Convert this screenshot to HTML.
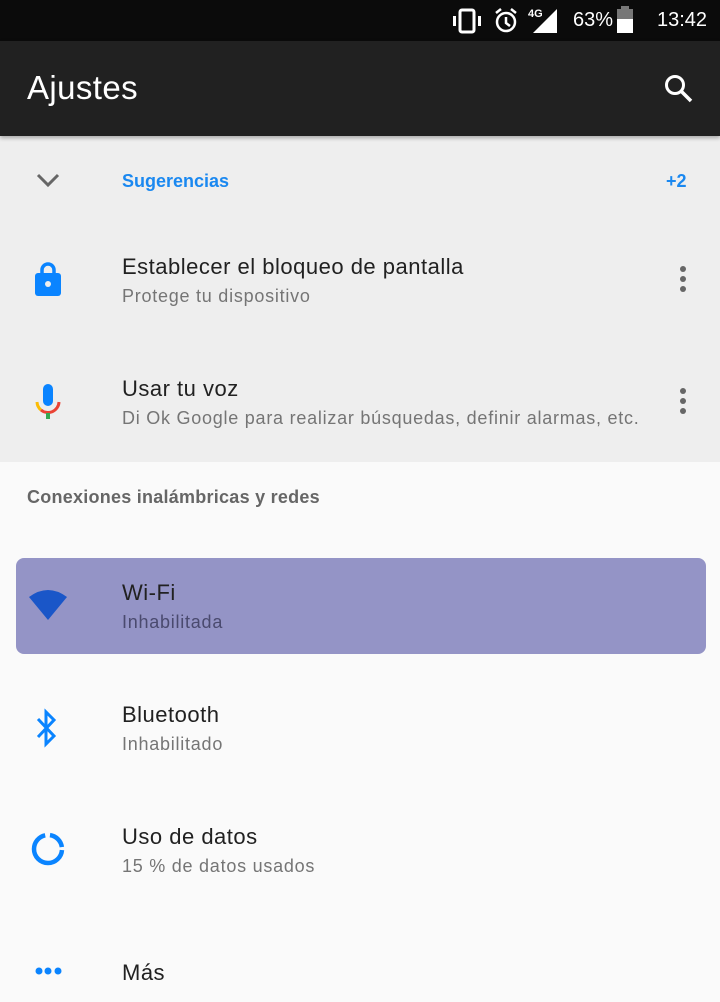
<!DOCTYPE html><html><head><style>
body{margin:0;width:720px;height:1002px;overflow:hidden;background:#fafafa;font-family:"Liberation Sans",sans-serif;position:relative}
.a{position:absolute}
.t{position:absolute;left:122px;font-size:22px;letter-spacing:0.5px;color:#212121;white-space:nowrap}
.s{position:absolute;left:122px;font-size:18px;letter-spacing:0.75px;color:#757575;white-space:nowrap}
.dots{position:absolute;left:680px;width:6px}
.dots i{display:block;width:6px;height:6px;border-radius:3px;background:#666;margin-bottom:4px}
</style></head><body>
<div class="a" style="left:0;top:0;width:720px;height:41px;background:#0b0b0b"></div>
<svg class="a" style="left:450px;top:6px" width="40" height="30" viewBox="0 0 40 30"><rect x="10" y="4" width="14" height="22" rx="2" fill="none" stroke="#fff" stroke-width="3"/><rect x="3" y="10" width="3" height="10" fill="#fff"/><rect x="28" y="10" width="3" height="10" fill="#fff"/></svg>
<svg class="a" style="left:493px;top:7px" width="26" height="28" viewBox="0 0 26 28"><circle cx="13" cy="15" r="9" fill="none" stroke="#fff" stroke-width="2.5"/><path d="M13 10v6l4 3M3 6l5-4M23 6l-5-4" stroke="#fff" stroke-width="2.5" fill="none"/></svg>
<div class="a" style="left:528px;top:8px;font-size:11px;color:#fff;font-weight:bold">4G</div>
<svg class="a" style="left:532px;top:9px" width="26" height="24"><polygon points="25,0 25,24 1,24" fill="#fff"/></svg>
<div class="a" style="left:573px;top:9px;font-size:20px;color:#fff">63%</div>
<div class="a" style="left:617px;top:9px;width:16px;height:24px;background:#fff"></div><div class="a" style="left:617px;top:9px;width:16px;height:10px;background:#777"></div><div class="a" style="left:621px;top:6px;width:8px;height:3px;background:#777"></div>
<div class="a" style="left:657px;top:9px;font-size:20px;color:#fff">13:42</div>
<div class="a" style="left:0;top:41px;width:720px;height:95px;background:#212121;box-shadow:0 2px 4px rgba(0,0,0,.3)"></div>
<div class="a" style="left:27px;top:69px;font-size:33px;letter-spacing:0.4px;color:#fff">Ajustes</div>
<svg class="a" style="left:663px;top:73px" width="32" height="32" viewBox="0 0 32 32"><circle cx="12" cy="12" r="8.5" fill="none" stroke="#fff" stroke-width="3"/><path d="M18 18l10 10" stroke="#fff" stroke-width="3.5"/></svg>
<div class="a" style="left:0;top:136px;width:720px;height:326px;background:#eeeeee;z-index:-1"></div>
<svg class="a" style="left:36px;top:172px" width="24" height="16"><path d="M2 3l10 10 10-10" stroke="#666" stroke-width="3" fill="none"/></svg>
<div class="a" style="left:122px;top:171px;font-size:18px;font-weight:bold;color:#1a88f0">Sugerencias</div>
<div class="a" style="left:666px;top:171px;font-size:18px;font-weight:bold;color:#1a88f0">+2</div>
<svg class="a" style="left:34px;top:260px" width="28" height="36" viewBox="0 0 28 36"><path d="M8 14V10a6 6 0 0 1 12 0v4" stroke="#0a84ff" stroke-width="3.5" fill="none"/><rect x="1" y="13" width="26" height="23" rx="3" fill="#0a84ff"/><circle cx="14" cy="24" r="3" fill="#eee"/></svg>
<div class="t" style="top:254px">Establecer el bloqueo de pantalla</div>
<div class="s" style="top:286px">Protege tu dispositivo</div>
<div class="dots" style="top:266px"><i></i><i></i><i></i></div>
<svg class="a" style="left:34px;top:382px" width="28" height="40" viewBox="0 0 28 40"><rect x="9" y="2" width="10" height="22" rx="5" fill="#0a84ff"/><path d="M3 20a11 11 0 0 0 4 8" stroke="#fbbc05" stroke-width="3" fill="none"/><path d="M7 28a11 11 0 0 0 18-8" stroke="#ea4335" stroke-width="3" fill="none"/><rect x="12" y="31" width="4" height="6" fill="#34a853"/></svg>
<div class="t" style="top:376px">Usar tu voz</div>
<div class="s" style="top:408px">Di Ok Google para realizar búsquedas, definir alarmas, etc.</div>
<div class="dots" style="top:388px"><i></i><i></i><i></i></div>
<div class="a" style="left:27px;top:487px;font-size:18px;font-weight:bold;letter-spacing:0.25px;color:#666">Conexiones inalámbricas y redes</div>
<div class="a" style="left:16px;top:558px;width:690px;height:96px;border-radius:8px;background:#9494c6"></div>
<svg class="a" style="left:28px;top:588px" width="40" height="34" viewBox="0 0 40 34"><path d="M1 9Q20 -5 39 9L20 32Z" fill="#1a56c8"/></svg>
<div class="t" style="top:580px">Wi-Fi</div>
<div class="s" style="top:612px;color:#4a4a6e">Inhabilitada</div>
<svg class="a" style="left:34px;top:708px" width="26" height="40" viewBox="0 0 26 40"><path d="M4 11l16 17-8 8V4l8 8L4 29" stroke="#0a84ff" stroke-width="3" fill="none"/></svg>
<div class="t" style="top:702px">Bluetooth</div>
<div class="s" style="top:734px">Inhabilitado</div>
<svg class="a" style="left:30px;top:831px" width="36" height="36" viewBox="0 0 36 36"><circle cx="18" cy="18" r="14" fill="none" stroke="#0a84ff" stroke-width="4.5" stroke-dasharray="18 3 62 5" stroke-dashoffset="-2" transform="rotate(-90 18 18)"/></svg>
<div class="t" style="top:824px">Uso de datos</div>
<div class="s" style="top:856px">15 % de datos usados</div>
<svg class="a" style="left:34px;top:965px" width="30" height="12"><circle cx="5" cy="6" r="3.5" fill="#0a84ff"/><circle cx="14" cy="6" r="3.5" fill="#0a84ff"/><circle cx="24" cy="6" r="3.5" fill="#0a84ff"/></svg>
<div class="t" style="top:960px">Más</div>
</body></html>
